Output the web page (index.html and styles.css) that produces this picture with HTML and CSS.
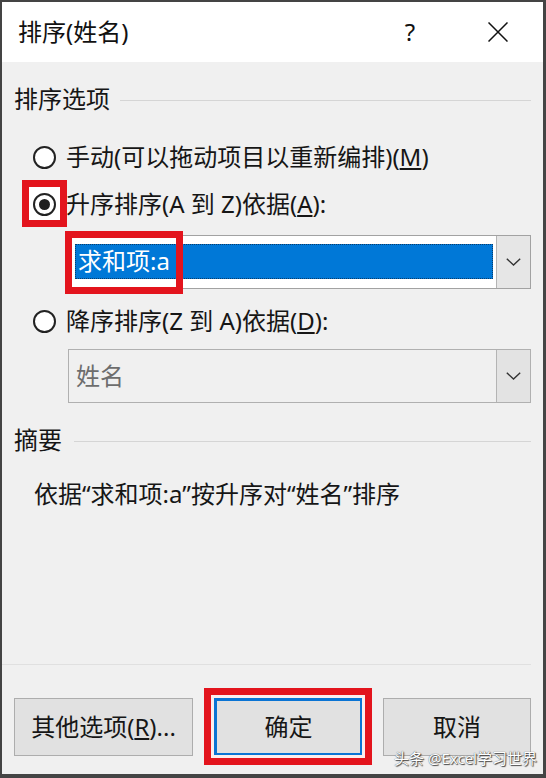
FILE: index.html
```html
<!DOCTYPE html>
<html lang="zh-CN">
<head>
<meta charset="utf-8">
<title>排序(姓名)</title>
<link rel="stylesheet" href="styles.css">
</head>
<body>
<div class="dialog">
  <div class="titlebar">
    <span class="title">排序(姓名)</span>
    <span class="help">?</span>
    <span class="close">
      <svg width="20" height="20" viewBox="0 0 20 20"><path d="M0.5 0.5 L19.5 19.5 M19.5 0.5 L0.5 19.5" stroke="#111" stroke-width="1.5" fill="none"/></svg>
    </span>
  </div>
  <div class="body">
    <div class="group-head"><span>排序选项</span><i class="rule"></i></div>
    <div class="options">
      <div class="radio-row r1"><span class="radio"></span><span>手动(可以拖动项目以重新编排)(<u>M</u>)</span></div>
      <div class="radio-row r2"><span class="hl-radio"><span class="radio checked"></span></span><span>升序排序(A 到 Z)依据(<u>A</u>):</span></div>
      <div class="combo c1">
        <span class="combo-field"><span class="sel">求和项:a</span></span>
        <span class="combo-btn"><svg width="15" height="8" viewBox="0 0 15 8"><path d="M0.8 0.8 L7.5 7 L14.2 0.8" stroke="#333" stroke-width="1.4" fill="none"/></svg></span>
        <span class="hl-sel"></span>
      </div>
      <div class="radio-row r3"><span class="radio"></span><span>降序排序(Z 到 A)依据(<u>D</u>):</span></div>
      <div class="combo c2 disabled">
        <span class="combo-field"><span class="val">姓名</span></span>
        <span class="combo-btn"><svg width="15" height="8" viewBox="0 0 15 8"><path d="M0.8 0.8 L7.5 7 L14.2 0.8" stroke="#333" stroke-width="1.4" fill="none"/></svg></span>
      </div>
    </div>
    <div class="group-head g2"><span>摘要</span><i class="rule"></i></div>
    <p class="summary">依据“求和项:a”按升序对“姓名”排序</p>
    <div class="spacer"></div>
    <div class="sep"></div>
    <div class="buttons">
      <div class="btn b1">其他选项(<u>R</u>)...</div>
      <div class="btn b2 primary">确定</div>
      <div class="btn b3">取消</div>
    </div>
  </div>
  <div class="watermark">头条 @Excel学习世界</div>
</div>
</body>
</html>
```

FILE: styles.css
```css
html, body {
  margin: 0;
  padding: 0;
}
body {
  width: 546px;
  height: 778px;
  overflow: hidden;
  background: #3c3c3c;
  font-family: "Noto Sans", "Noto Sans CJK SC", sans-serif;
  color: #161616;
}
.dialog {
  box-sizing: border-box;
  width: 546px;
  height: 778px;
  border: 2px solid #444;
  border-right-width: 3px;
  border-bottom-width: 4px;
  background: #f0f0f0;
  display: flex;
  flex-direction: column;
  position: relative;
}
.titlebar {
  flex: none;
  height: 60px;
  background: #fff;
  display: flex;
  align-items: center;
  padding-left: 16px;
}
.title {
  flex: 1;
  font-size: 24px;
  line-height: 32px;
  color: #111;
}
.help {
  width: 24px;
  text-align: center;
  font-size: 24px;
  line-height: 32px;
  color: #111;
  margin-right: 66px;
}
.close {
  width: 20px;
  height: 20px;
  margin-right: 35px;
  display: flex;
}
.body {
  flex: 1;
  display: flex;
  flex-direction: column;
  padding: 21px 12px 18px 12px;
}
.group-head {
  display: flex;
  align-items: center;
  height: 32px;
  font-size: 24px;
  line-height: 32px;
}
.group-head .rule {
  flex: 1;
  height: 1px;
  background: #d5d5d5;
  margin-left: 10px;
  margin-top: 2px;
}
.options {
  padding-left: 19px;
  display: flex;
  flex-direction: column;
}
.radio-row {
  display: flex;
  align-items: center;
  height: 46px;
  font-size: 24px;
  line-height: 32px;
}
.r1 { margin-top: 19px; }
.r2 { margin-top: 1px; }
.r3 { margin-top: 9px; }
.radio {
  box-sizing: border-box;
  width: 23px;
  height: 23px;
  border: 2px solid #222;
  border-radius: 50%;
  background: #fff;
  margin-right: 10px;
  display: flex;
  align-items: center;
  justify-content: center;
  flex: none;
}
.radio.checked::after {
  content: "";
  width: 11px;
  height: 11px;
  border-radius: 50%;
  background: #1e1e1e;
}
.hl-radio {
  position: relative;
  z-index: 0;
  display: flex;
}
.hl-radio::before {
  content: "";
  position: absolute;
  left: -11px;
  top: -13px;
  width: 45px;
  height: 47px;
  box-sizing: border-box;
  border: 7px solid #e3141d;
  background: #fff;
  z-index: -1;
}
.combo {
  position: relative;
  box-sizing: border-box;
  height: 54px;
  margin-left: 35px;
  border: 1px solid #a2a2a2;
  background: #fff;
  display: flex;
}
.c1 { margin-top: 8px; }
.c2 { margin-top: 5px; }
.combo-field {
  flex: 1;
  display: flex;
  padding: 8px 3px 9px 6px;
}
.sel {
  flex: 1;
  box-sizing: border-box;
  background: #0078d7;
  color: #fff;
  font-size: 24px;
  line-height: 31px;
  padding-left: 2px;
  border: 1px dotted #0b3d6b;
}
.combo-btn {
  width: 33px;
  flex: none;
  background: #e6e6e6;
  border-left: 1px solid #b4b4b4;
  display: flex;
  align-items: center;
  justify-content: center;
}
.hl-sel {
  position: absolute;
  left: -4px;
  top: -5px;
  width: 118px;
  height: 63px;
  box-sizing: border-box;
  border: 7px solid #e3141d;
}
.combo.disabled {
  background: #f0f0f0;
  border-color: #b0b0b0;
}
.combo.disabled .combo-field {
  padding: 0 0 0 7px;
  align-items: center;
}
.combo.disabled .combo-btn {
  background: #e3e3e3;
}
.val {
  font-size: 24px;
  line-height: 32px;
  color: #6d6d6d;
}
.g2 { margin-top: 21px; }
.group-head.g2 .rule { margin-left: 12px; }
.summary {
  margin: 22px 0 0 20px;
  font-size: 24px;
  line-height: 32px;
}
.spacer { flex: 1; }
.sep {
  height: 1px;
  background: #e0e0e0;
  margin-left: -12px;
  margin-bottom: 33px;
}
.buttons {
  display: flex;
  height: 58px;
}
.btn {
  box-sizing: border-box;
  height: 58px;
  border: 1px solid #adadad;
  background: #e1e1e1;
  font-size: 24px;
  line-height: 32px;
  display: flex;
  align-items: center;
  justify-content: center;
}
.b1 { width: 179px; }
.b2 { width: 149px; margin-left: 21px; }
.b3 { width: 148px; margin-left: 20px; }
.primary {
  position: relative;
  border: 3px solid #0a74d4;
}
.primary::after {
  content: "";
  position: absolute;
  left: -13px;
  top: -13px;
  right: -12px;
  bottom: -12px;
  border: 7px solid #e3141d;
  box-shadow: inset 0 0 0 3px #fbeeee;
}
.watermark {
  position: absolute;
  right: 6px;
  bottom: 7px;
  font-size: 15px;
  line-height: 18px;
  color: #fff;
  text-shadow: 1px 1px 1px #444, 0 0 1px #333;
}
```
